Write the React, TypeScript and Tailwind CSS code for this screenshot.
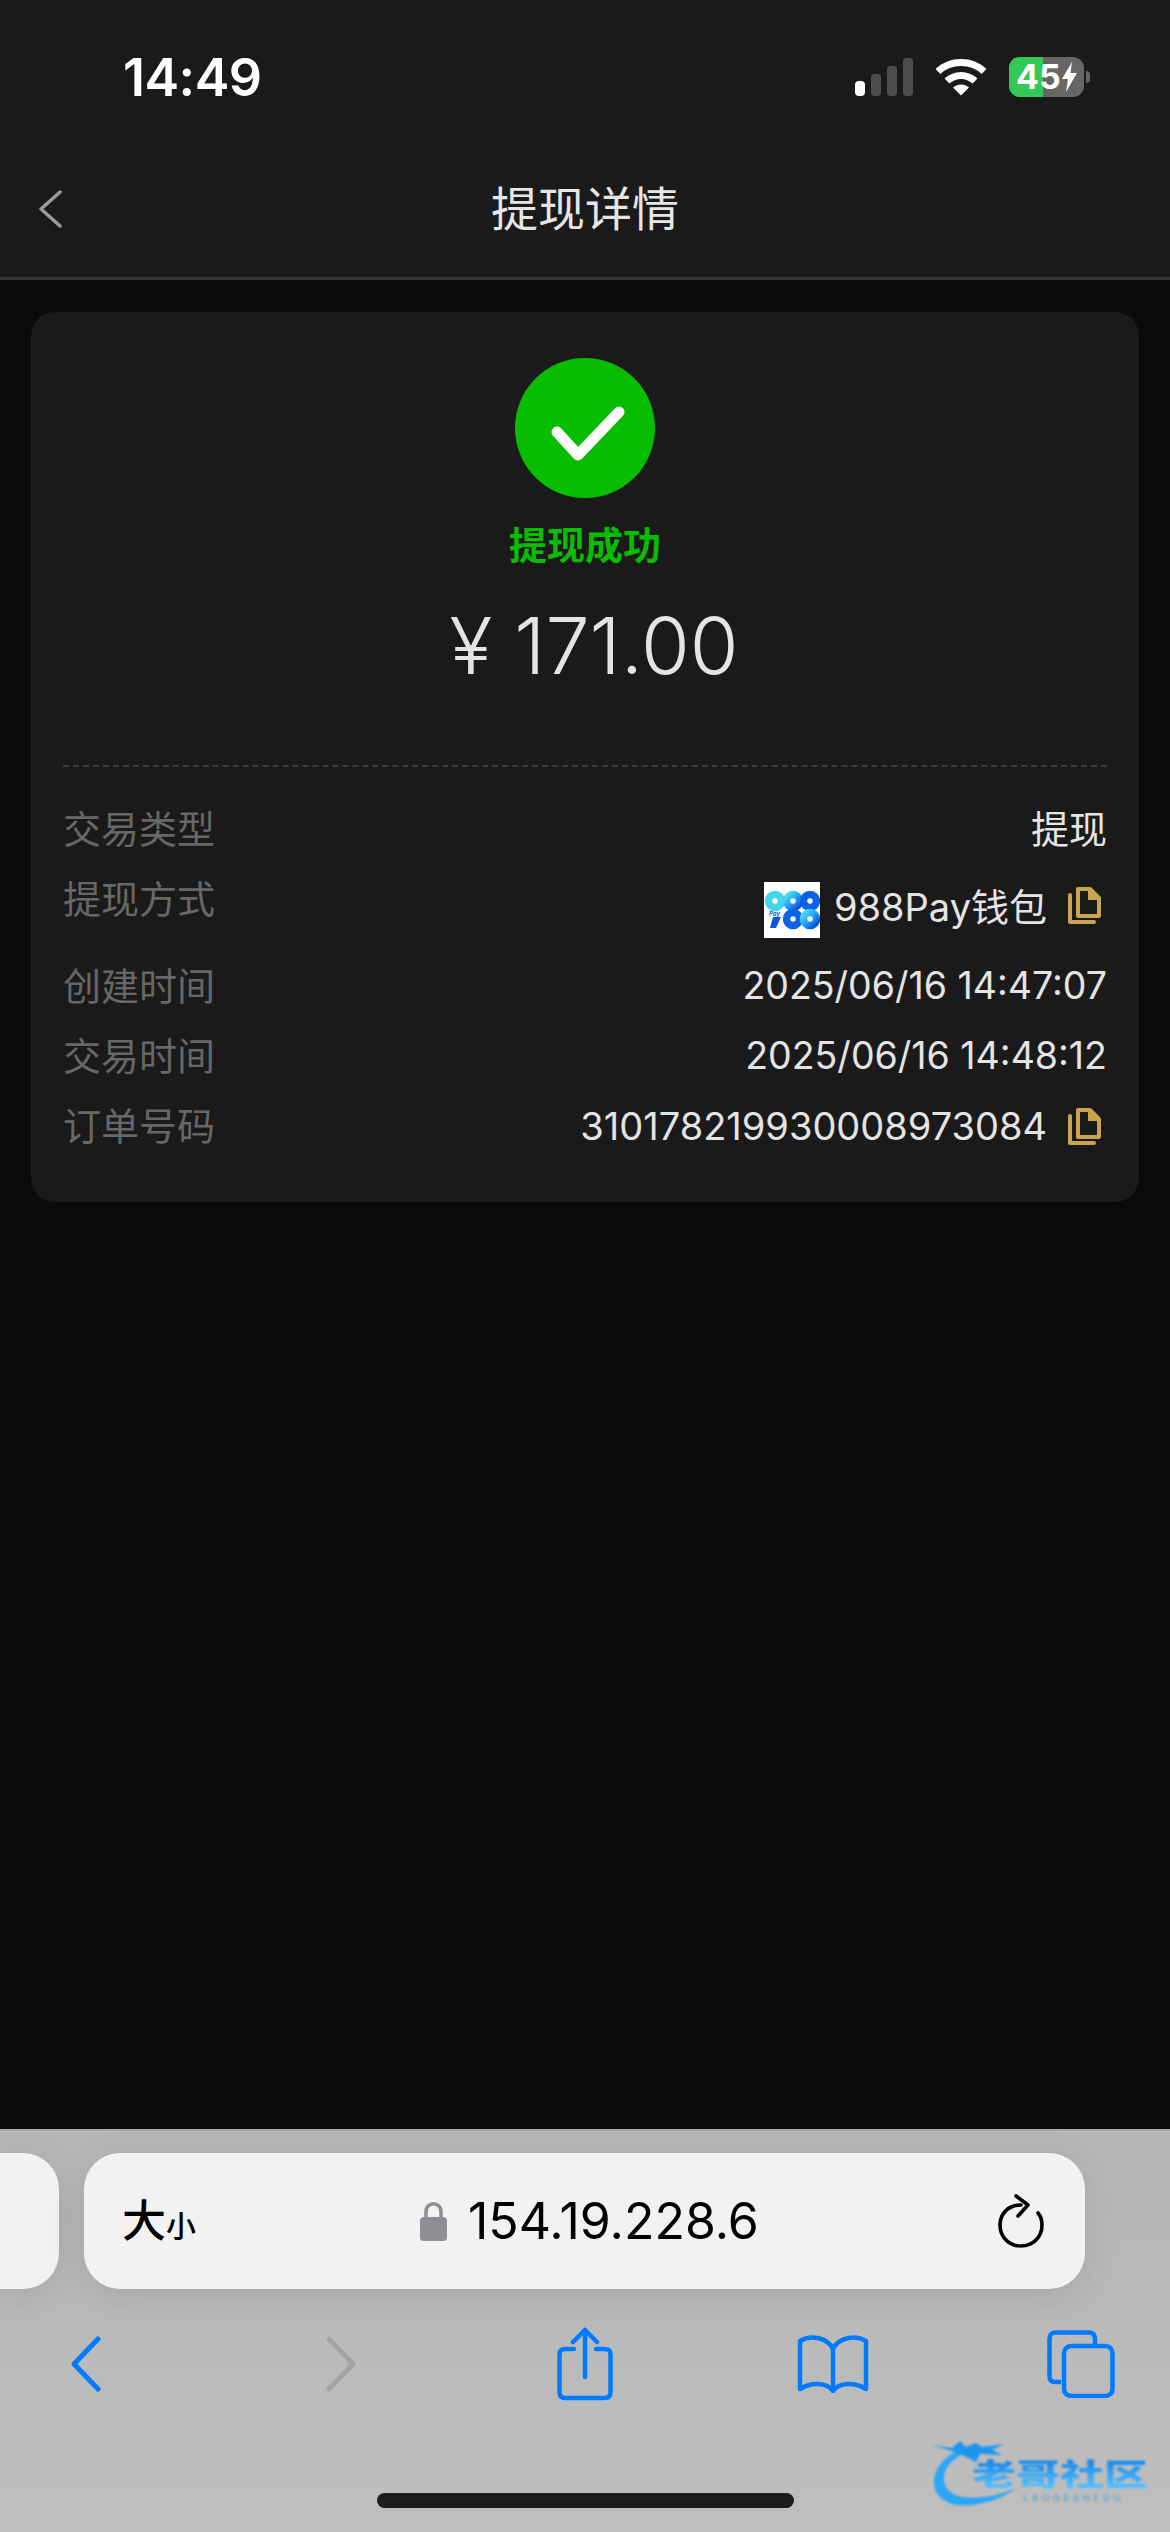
import type { ReactNode } from "react";

function SignalBars() {
  return (
    <svg width="58" height="38" viewBox="0 0 58 38">
      <rect x="0" y="23" width="10" height="15" rx="4" fill="#ffffff" />
      <rect x="16" y="16" width="10" height="22" rx="3.5" fill="#4d4d4d" />
      <rect x="32" y="8" width="10" height="30" rx="3.5" fill="#4d4d4d" />
      <rect x="48" y="0" width="10" height="38" rx="3.5" fill="#4d4d4d" />
    </svg>
  );
}

function WifiGlyph() {
  return (
    <svg width="52" height="38" viewBox="0 0 52 38" fill="none" stroke="#ffffff" strokeWidth="7">
      <path d="M3 13.5C15.5 1.5 36.5 1.5 49 13.5" />
      <path d="M12 23C20 15.5 32 15.5 40 23" />
      <path d="M18 29.5L26 37.5L34 29.5C29 25.5 23 25.5 18 29.5Z" fill="#ffffff" stroke="none" />
    </svg>
  );
}

function BatteryPill() {
  return (
    <div className="flex items-center">
      <div className="relative flex h-[40px] w-[75px] items-center overflow-hidden rounded-[11px] bg-[#666666]">
        <div className="absolute left-0 top-0 h-full w-[34px] bg-[#34c759]" />
        <span className="relative ml-[7px] text-[34px] font-bold leading-none text-white">45</span>
        <svg className="relative ml-[1px]" width="15" height="30" viewBox="0 0 15 30" fill="#ffffff">
          <path d="M10 0L0 17H6L4 30L15 11H8.5Z" />
        </svg>
      </div>
      <div className="ml-[2px] h-[12px] w-[4px] rounded-r-full bg-[#666666]" />
    </div>
  );
}

function CopyIcon(props: { raised?: boolean }) {
  return (
    <svg
      className={props.raised ? "ml-[21px] mr-[6px] mt-[5px] shrink-0" : "ml-[21px] mr-[6px] shrink-0"}
      width="33"
      height="37"
      viewBox="0 0 33 37"
      fill="none"
      stroke="#c9a44e"
      strokeWidth="4"
    >
      <path d="M10 2H22L31 11V29H10Z" strokeLinejoin="round" />
      <path d="M22 2V11H31" fill="#c9a44e" />
      <path d="M2 8V35H26" strokeLinecap="round" strokeLinejoin="round" />
    </svg>
  );
}

// 988 钱包图标
function WalletLogo() {
  return (
    <svg className="mr-[14px] shrink-0 bg-white" width="56" height="56" viewBox="0 0 56 56" fill="none">
      <defs>
        <linearGradient id="logoBlue" x1="0" y1="0" x2="1" y2="1">
          <stop offset="0" stopColor="#4fdcf2" />
          <stop offset="0.55" stopColor="#1d9bf0" />
          <stop offset="1" stopColor="#0a49dc" />
        </linearGradient>
      </defs>
      <circle cx="11" cy="19" r="6.500" stroke="#45d6ef" strokeWidth="7.500" />
      <circle cx="29" cy="19" r="6.500" stroke="url(#logoBlue)" strokeWidth="7.500" />
      <circle cx="46" cy="19" r="6.500" stroke="#0f62e6" strokeWidth="7.500" />
      <circle cx="29" cy="37" r="6.500" stroke="#0f62e6" strokeWidth="7.500" />
      <circle cx="46" cy="37" r="6.500" stroke="url(#logoBlue)" strokeWidth="7.500" />
      <path d="M9 35H17L12 46H6Z" fill="#0f55e0" />
      <text x="5" y="34" fontSize="6" fontWeight="700" fontStyle="italic" fill="#1557d8">Pay</text>
    </svg>
  );
}

function DetailRow(props: { label: string; tall?: boolean; children: ReactNode }) {
  return (
    <div className={props.tall ? "flex h-[67px] items-start justify-between" : "flex h-[50px] items-center justify-between"}>
      <span className="text-[38px] leading-[50px] text-[#676767]">{props.label}</span>
      <div className={props.tall ? "mt-[8px] flex h-[56px] items-start text-[38px] leading-[50px] text-[#e4e4e4]" : "flex items-center text-[38px] leading-[50px] text-[#e4e4e4]"}>
        {props.children}
      </div>
    </div>
  );
}

function SafariToolbar() {
  return (
    <footer className="relative h-[403px] border-t-[2px] border-[#a9a9a9] bg-gradient-to-b from-[#b6b6b6] to-[#bebebe] pt-[22px]">
      <div className="flex gap-[25px]">
        <div className="h-[136px] w-[59px] rounded-r-[36px] bg-[#f2f2f2] shadow-[0_8px_36px_rgba(0,0,0,0.1)]" />
        <div className="flex h-[136px] w-[1001px] items-center rounded-[36px] bg-[#f2f2f2] pl-[38px] pr-[41px] shadow-[0_8px_36px_rgba(0,0,0,0.1)]">
          <span className="flex w-[298px] items-baseline text-black">
            <span className="text-[44px] font-medium leading-none">大</span>
            <span className="text-[30px] font-medium leading-none">小</span>
          </span>
          <svg width="27" height="39" viewBox="0 0 27 39" fill="none">
            <path d="M6 17V10C6 -1 21 -1 21 10V17" stroke="#8e8e93" strokeWidth="3.5" />
            <rect x="0" y="15" width="27" height="24" rx="4" fill="#8e8e93" />
          </svg>
          <span className="ml-[21px] flex-1 text-[50px] font-normal leading-none text-black">154.19.228.6</span>
          <svg width="46" height="54" viewBox="0 0 46 54" fill="none" stroke="#000000" strokeWidth="3.6" strokeLinecap="round" strokeLinejoin="round">
            <path d="M23 11C10 11 2 20 2 31C2 43 11 52 23 52C35 52 44 43 44 31C44 26 42.500 22 40 19" />
            <path d="M18 2L30 11L20 22" />
          </svg>
        </div>
      </div>
      <div className="relative mt-[38px] flex h-[74px] items-center pl-[71px]">
        <svg width="30" height="56" viewBox="0 0 30 56" fill="none" stroke="#007aff" strokeWidth="5" strokeLinecap="round" strokeLinejoin="round">
          <path d="M27 3L3 28L27 53" />
        </svg>
        <svg className="ml-[225px]" width="30" height="56" viewBox="0 0 30 56" fill="none" stroke="#a3a3a3" strokeWidth="5" strokeLinecap="round" strokeLinejoin="round">
          <path d="M3 3L27 28L3 53" />
        </svg>
        <svg className="ml-[201px]" width="56" height="74" viewBox="0 0 56 74" fill="none" stroke="#007aff" strokeWidth="4.500" strokeLinecap="round" strokeLinejoin="round">
          <path d="M17 22H8C4.500 22 2.500 24 2.500 27.500V65C2.500 69 4.500 71 8 71H48C51.500 71 53.500 69 53.500 65V27.500C53.500 24 51.500 22 48 22H39" />
          <path d="M28 50V3" />
          <path d="M16 15L28 3L40 15" />
        </svg>
        <svg className="ml-[184px]" width="72" height="58" viewBox="0 0 72 58" fill="none" stroke="#007aff" strokeWidth="4.500" strokeLinejoin="round">
          <path d="M36 14C31 3 14 -1 3 6V54C14 47 30 47 36 56C42 47 58 47 69 54V6C58 -1 41 3 36 14Z" />
          <path d="M36 14V56" />
        </svg>
        <svg className="ml-[178px]" width="68" height="68" viewBox="0 0 68 68" fill="none" stroke="#007aff" strokeWidth="4.500" strokeLinejoin="round">
          <path d="M14 52H8C4.500 52 2.500 50 2.500 46V9C2.500 5 4.500 2.500 8 2.500H42C46 2.500 48 5 48 9V16" />
          <rect x="17" y="16" width="48.500" height="50" rx="7" />
        </svg>
      </div>
      <div className="absolute bottom-[24px] left-[377px] h-[15px] w-[417px] rounded-full bg-[#1c1c1c]" />
      {/* 社区水印 */}
      <div className="absolute bottom-[24px] left-[932px] h-[70px] w-[222px] blur-[0.8px]">
        <svg className="absolute left-0 top-0" width="110" height="70" viewBox="0 0 110 70" fill="none">
          <path d="M36 8C14 16 1 30 2 46C3 62 22 70 40 67C54 65 72 60 84 50C68 58 42 62 26 58C12 54 8 40 16 28C22 20 32 14 42 12Z" fill="#2ba6f5" />
          <path d="M0 7L20 10L28 3L34 9L44 5L50 9L72 6L60 12L70 17L48 16L44 24L32 18L20 13Z" fill="#1e96ef" />
        </svg>
        <span className="absolute left-[40px] top-[21px] origin-top scale-y-[0.68] whitespace-nowrap bg-gradient-to-b from-[#0f83ea] to-[#56c4fb] bg-clip-text text-[44px] font-black leading-none text-transparent">老哥社区</span>
        <span className="absolute left-[91px] top-[55px] whitespace-nowrap text-[9px] leading-none tracking-[4px] text-[#3c9fe6]">LAOGESHEOU</span>
      </div>
    </footer>
  );
}

export default function App() {
  return (
    <div className="flex min-h-[2532px] w-[1170px] flex-col bg-[#0a0a0a] font-['Inter','Noto_Sans_CJK_SC',sans-serif]">
      <header className="h-[280px] border-b-[3px] border-[#333333] bg-[#1a1a1a]">
        <div className="flex h-[179px] items-start justify-between pl-[123px] pr-[80px] pt-[53px]">
          <span className="text-[52px] font-semibold leading-[50px] tracking-[-0.5px] text-white">14:49</span>
          <div className="mt-[4px] flex items-center">
            <SignalBars />
            <div className="ml-[22px]">
              <WifiGlyph />
            </div>
            <div className="ml-[22px]">
              <BatteryPill />
            </div>
          </div>
        </div>
        <div className="relative flex h-[60px] items-center justify-center">
          <svg className="absolute left-[38px] top-[11px]" width="24" height="38" viewBox="0 0 24 38" fill="none" stroke="#9b9b9b" strokeWidth="3.500" strokeLinecap="round" strokeLinejoin="round">
            <path d="M22 2L3 19L22 36" />
          </svg>
          <h1 className="text-[47px] font-normal leading-[60px] text-[#e6e6e6]">提现详情</h1>
        </div>
      </header>

      <main className="flex-1 px-[31px] pt-[32px]">
        <section className="h-[890px] rounded-[24px] bg-[#1a1a1a] px-[32px] pt-[46px]">
          <div className="flex flex-col items-center">
            <div className="flex h-[140px] w-[140px] items-center justify-center rounded-full bg-[#08bd00]">
              <svg className="ml-[6px] mt-[10px]" width="74" height="55" viewBox="0 0 74 55" fill="none" stroke="#ffffff" strokeWidth="11" strokeLinecap="round" strokeLinejoin="round">
                <path d="M6 26L27 49L68 6" />
              </svg>
            </div>
            <p className="mt-[22px] text-[38px] font-bold leading-[50px] text-[#08bd00]">提现成功</p>
            <p className="ml-[18px] mt-[29px] text-[79px] font-light leading-[92px] text-[#e4e4e4]">¥ 171.00</p>
          </div>
          <div className="mt-[74px] border-t-[2px] border-dashed border-[#3c3c3c]" />
          <div className="mt-[37px] flex flex-col gap-[20px]">
            <DetailRow label="交易类型">提现</DetailRow>
            <DetailRow label="提现方式" tall>
              <WalletLogo />
              <span>988Pay钱包</span>
              <CopyIcon raised />
            </DetailRow>
            <DetailRow label="创建时间">
              <span className="text-[37.5px]">2025/06/16 14:47:07</span>
            </DetailRow>
            <DetailRow label="交易时间">
              <span className="text-[37.5px]">2025/06/16 14:48:12</span>
            </DetailRow>
            <DetailRow label="订单号码">
              <span>310178219930008973084</span>
              <CopyIcon />
            </DetailRow>
          </div>
        </section>
      </main>

      <SafariToolbar />
    </div>
  );
}
